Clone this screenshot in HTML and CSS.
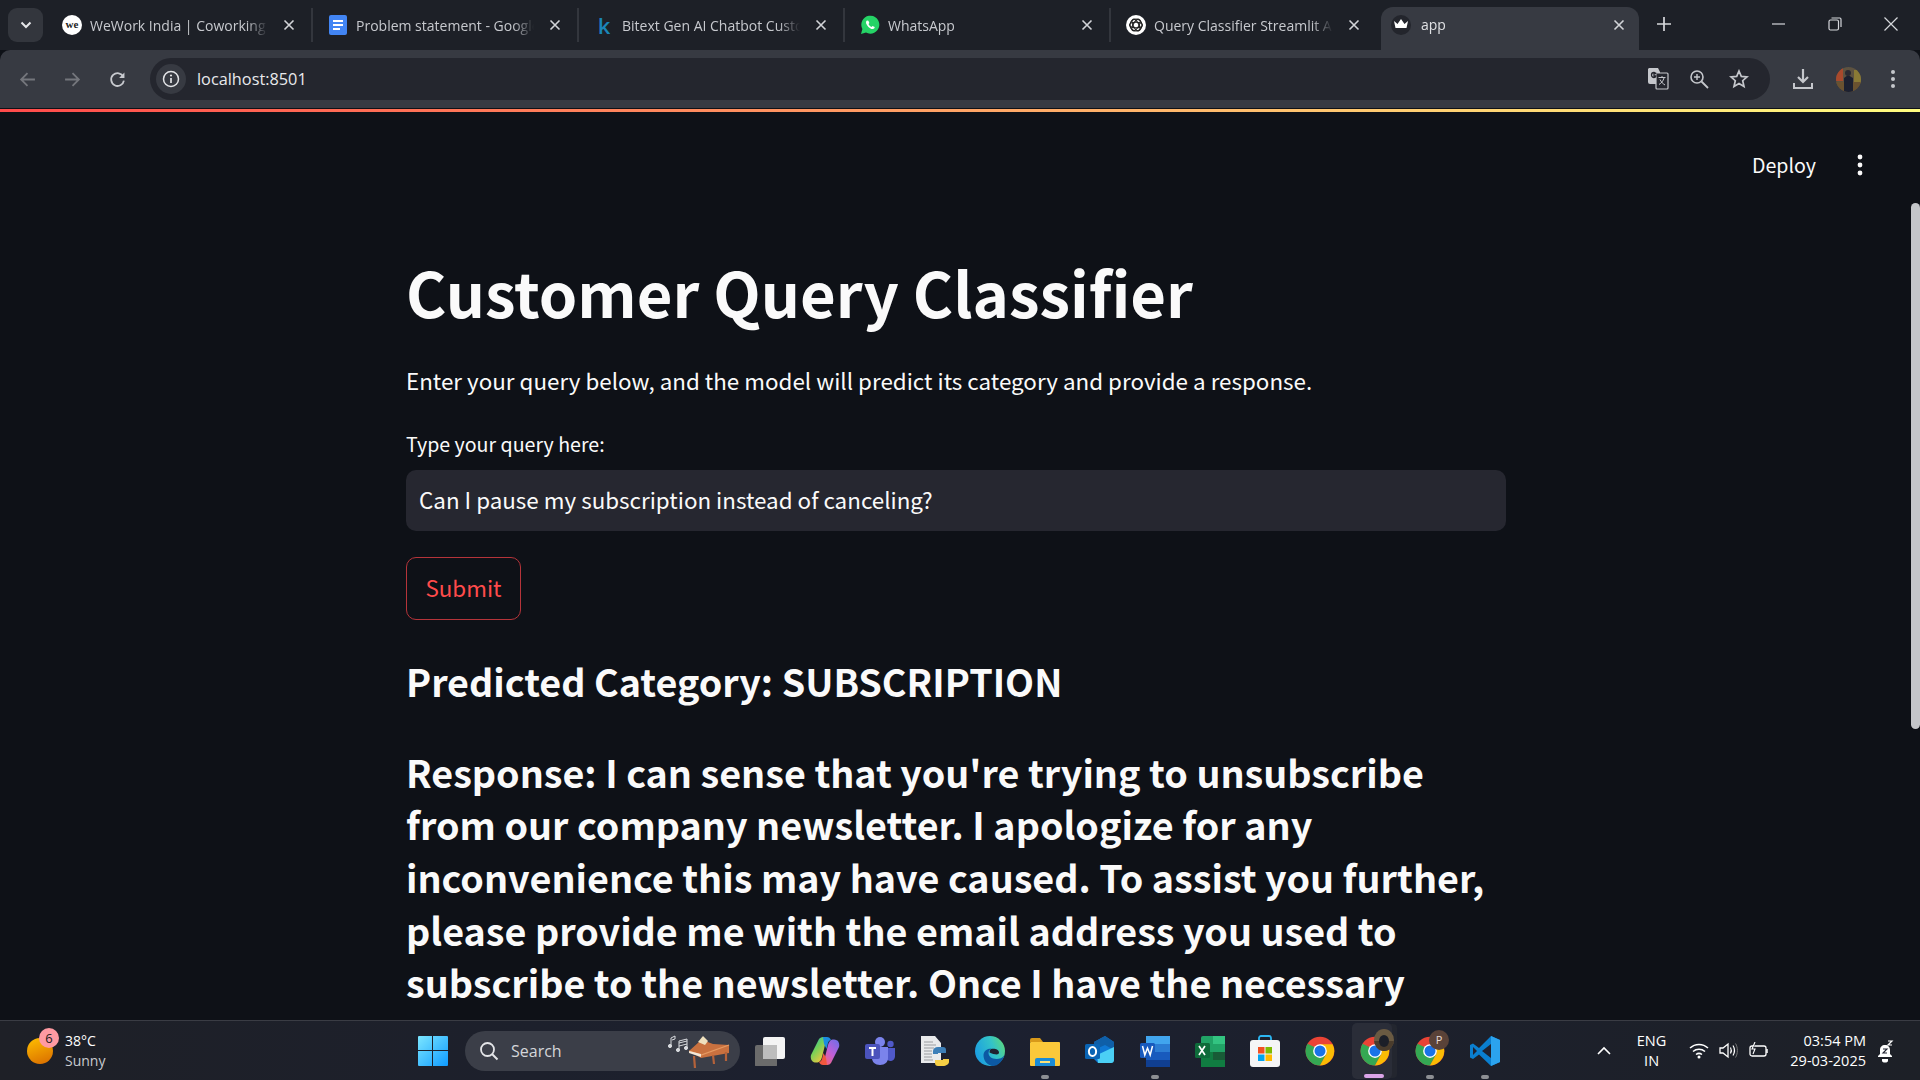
FILE: index.html
```html
<!DOCTYPE html>
<html lang="en">
<head>
    <meta charset="UTF-8">
    <title>app</title>
    <link rel="stylesheet" href="styles.css">
</head>
<body>
    <svg class="defs" width="0" height="0">
        <symbol id="chrome" viewBox="0 0 48 48">
            <circle cx="24" cy="24" r="23" fill="#ea4335"/>
            <path d="M4 12.500A23 23 0 0 0 24 47L35 27z" fill="#34a853"/>
            <path d="M24 13H44A23 23 0 0 1 24 47L35 27z" fill="#fbbc04"/>
            <circle cx="24" cy="24" r="11" fill="#fff"/>
            <circle cx="24" cy="24" r="8.800" fill="#1a73e8"/>
        </symbol>
        <symbol id="close" viewBox="0 0 12 12">
            <path d="M1.500 1.500 10.500 10.500M10.500 1.500 1.500 10.500" stroke="currentColor" stroke-width="1.600" fill="none"/>
        </symbol>
    </svg>

    <!-- Полоса вкладок -->
    <div class="tabstrip">
        <button class="tab-search">
            <svg width="12" height="8" viewBox="0 0 12 8"><path d="M1.500 1.500 6 6l4.500-4.500" stroke="#e6e7ea" stroke-width="2" fill="none"/></svg>
        </button>
        <div class="tab">
            <span class="fav fav-we">we</span>
            <span class="tab-title">WeWork India | Coworking Space</span>
            <svg class="tab-close"><use href="#close"/></svg>
        </div>
        <div class="tab">
            <svg class="fav" viewBox="0 0 20 20"><rect x="1" width="18" height="20" rx="2" fill="#4285f4"/><path d="M5 6h10M5 10h10M5 14h7" stroke="#fff" stroke-width="1.800"/></svg>
            <span class="tab-title">Problem statement - Google Docs</span>
            <svg class="tab-close"><use href="#close"/></svg>
        </div>
        <div class="tab">
            <span class="fav fav-k">k</span>
            <span class="tab-title">Bitext Gen AI Chatbot Customer</span>
            <svg class="tab-close"><use href="#close"/></svg>
        </div>
        <div class="tab">
            <svg class="fav" viewBox="0 0 20 20"><path d="M1 19l1.400-5A9 9 0 1 1 6 17.600z" fill="#25d366"/><path d="M7 5.500c-1 .6-1.300 2-.6 3.600 1 2.200 2.700 3.900 5 4.800 1.500.5 2.600.1 3.100-.9l.2-1-2.200-1.100-1 1.100c-1.300-.5-2.400-1.600-3-2.900l.9-1-1-2.400z" fill="#fff"/></svg>
            <span class="tab-title">WhatsApp</span>
            <svg class="tab-close"><use href="#close"/></svg>
        </div>
        <div class="tab tab-last">
            <svg class="fav" viewBox="0 0 20 20"><circle cx="10" cy="10" r="10" fill="#fff"/><g fill="none" stroke="#222" stroke-width="1.100"><circle cx="10" cy="10" r="6"/><ellipse cx="10" cy="10" rx="6.500" ry="2.800" transform="rotate(60 10 10)"/><ellipse cx="10" cy="10" rx="6.500" ry="2.800" transform="rotate(-60 10 10)"/><ellipse cx="10" cy="10" rx="6.500" ry="2.800"/></g></svg>
            <span class="tab-title">Query Classifier Streamlit App</span>
            <svg class="tab-close"><use href="#close"/></svg>
        </div>
        <div class="tab tab-active">
            <span class="fav-crown">
                <svg width="14" height="11" viewBox="0 0 14 11"><path d="M0 2l3.500 3L7 0l3.500 5L14 2l-1.500 7h-11z" fill="#fff"/></svg>
            </span>
            <span class="tab-title">app</span>
            <svg class="tab-close"><use href="#close"/></svg>
        </div>
        <svg class="new-tab" width="14" height="14" viewBox="0 0 14 14"><path d="M7 0v14M0 7h14" stroke="#d6d8dc" stroke-width="1.700"/></svg>
        <div class="win-controls">
            <svg width="14" height="14" viewBox="0 0 14 14"><path d="M0 7h13" stroke="#d6d8dc" stroke-width="1.200"/></svg>
            <svg width="14" height="14" viewBox="0 0 14 14"><rect x="1" y="3" width="9.500" height="10" rx="1.500" fill="none" stroke="#d6d8dc" stroke-width="1.200"/><path d="M3.500 1H12a1.500 1.500 0 0 1 1 1.500V10" fill="none" stroke="#d6d8dc" stroke-width="1.200"/></svg>
            <svg width="14" height="14" viewBox="0 0 14 14"><path d="M.5.500l13 13M13.500.500l-13 13" stroke="#d6d8dc" stroke-width="1.200"/></svg>
        </div>
    </div>

    <!-- Панель адреса -->
    <div class="toolbar">
        <svg class="nav-btn" viewBox="0 0 16 16"><path d="M15 8H2M8 2 2 8l6 6" stroke="#74767c" stroke-width="1.700" fill="none"/></svg>
        <svg class="nav-btn" viewBox="0 0 16 16"><path d="M1 8h13M8 2l6 6-6 6" stroke="#74767c" stroke-width="1.700" fill="none"/></svg>
        <svg class="nav-btn" viewBox="0 0 16 16"><path d="M13.500 5.500A6 6 0 1 0 14 9" stroke="#c8cacf" stroke-width="1.700" fill="none"/><path d="M14.500 1.500v5h-5z" fill="#c8cacf"/></svg>
        <div class="omnibox">
            <span class="site-info">
                <svg width="18" height="18" viewBox="0 0 18 18"><circle cx="9" cy="9" r="7.500" fill="none" stroke="#e3e4e7" stroke-width="1.500"/><path d="M9 8v5" stroke="#e3e4e7" stroke-width="1.700"/><circle cx="9" cy="5.500" r="1.100" fill="#e3e4e7"/></svg>
            </span>
            <span class="url">localhost:8501</span>
            <span class="omni-icons">
                <svg width="22" height="24" viewBox="0 0 22 24"><path d="M2 1h9l2 4v12H3a2 2 0 0 1-2-2V2z" fill="#c5c7cc"/><rect x="9" y="6" width="12" height="16" rx="1" fill="#24262e" stroke="#c5c7cc" stroke-width="1.200"/><path d="M11.500 10.500h7M15 9v1.500M17 11c-.8 3-2.500 5-5 6.500M13 12.500c1 2 2.500 4 5 5.500" stroke="#c5c7cc" stroke-width="1" fill="none"/><path d="M9.500 6.500H7v2.500h1.800c-.2 1-1 1.500-1.800 1.500a2.500 2.500 0 0 1 0-5c.6 0 1 .2 1.400.5" stroke="#24262e" stroke-width="1.300" fill="none"/></svg>
                <svg width="20" height="20" viewBox="0 0 20 20"><circle cx="8" cy="8" r="6" fill="none" stroke="#c5c7cc" stroke-width="1.600"/><path d="M12.500 12.500 19 19" stroke="#c5c7cc" stroke-width="1.800"/><path d="M8 5v6M5 8h6" stroke="#c5c7cc" stroke-width="1.400"/></svg>
                <svg width="20" height="20" viewBox="0 0 20 20"><path d="M10 2l2.300 5.400 5.700.5-4.300 3.800 1.300 5.700L10 14.400l-5 3 1.300-5.700L2 7.900l5.700-.5z" fill="none" stroke="#c5c7cc" stroke-width="1.700"/></svg>
            </span>
        </div>
        <div class="tool-icons">
            <svg width="22" height="22" viewBox="0 0 22 22"><path d="M11 1v13M6 9l5 5 5-5" stroke="#c5c7cc" stroke-width="2.200" fill="none"/><path d="M2 15v5h18v-5" stroke="#c5c7cc" stroke-width="2" fill="none"/></svg>
            <svg width="25" height="25" viewBox="0 0 25 25"><clipPath id="av"><circle cx="12.500" cy="12.500" r="12.500"/></clipPath><g clip-path="url(#av)"><rect width="25" height="25" fill="#5d5240"/><rect width="7" height="14" fill="#a8492c"/><rect x="18" y="3" width="7" height="13" fill="#8a7a35"/><rect x="0" y="15" width="25" height="10" fill="#6a5230"/><path d="M8 25V11l4-3 5 3v14z" fill="#1c2030"/><circle cx="12" cy="6" r="3" fill="#2b2a32"/></g></svg>
            <svg class="menu-dots" width="6" height="20" viewBox="0 0 6 20"><circle cx="3" cy="3" r="2" fill="#c5c7cc"/><circle cx="3" cy="10" r="2" fill="#c5c7cc"/><circle cx="3" cy="17" r="2" fill="#c5c7cc"/></svg>
        </div>
    </div>
    <div class="deco-line"></div>

    <!-- Страница приложения -->
    <main class="app">
        <header class="app-header">
            <span class="deploy">Deploy</span>
            <svg width="6" height="22" viewBox="0 0 6 22"><circle cx="3" cy="3" r="2.400" fill="#fafafa"/><circle cx="3" cy="11" r="2.400" fill="#fafafa"/><circle cx="3" cy="19" r="2.400" fill="#fafafa"/></svg>
        </header>
        <div class="scroll-thumb"></div>
        <section class="block">
            <h1>Customer Query Classifier</h1>
            <p class="intro">Enter your query below, and the model will predict its category and provide a response.</p>
            <label class="field-label" for="query">Type your query here:</label>
            <input class="field" id="query" type="text" value="Can I pause my subscription instead of canceling?">
            <button class="submit">Submit</button>
            <h2 class="category">Predicted Category: SUBSCRIPTION</h2>
            <h2 class="response">Response: I can sense that you're trying to unsubscribe from our company newsletter. I apologize for any inconvenience this may have caused. To assist you further, please provide me with the email address you used to subscribe to the newsletter. Once I have the necessary</h2>
        </section>
    </main>

    <!-- Панель задач -->
    <footer class="taskbar">
        <div class="weather">
            <span class="sun"></span>
            <span class="badge">6</span>
            <div class="weather-text">
                <span>38°C</span>
                <span class="weather-sub">Sunny</span>
            </div>
        </div>
        <div class="task-center">
            <svg class="win-logo" width="30" height="30" viewBox="0 0 30 30">
                <defs><linearGradient id="wg" x1="0" y1="0" x2="1" y2="1"><stop offset="0" stop-color="#7ce6ff"/><stop offset="1" stop-color="#0f9bff"/></linearGradient></defs>
                <path d="M1 0h13v14H0V1a1 1 0 0 1 1-1zM15 0h14a1 1 0 0 1 1 1v13H15zM0 15h14v15H1a1 1 0 0 1-1-1zM15 15h15v14a1 1 0 0 1-1 1H15z" fill="url(#wg)"/>
            </svg>
            <div class="search-pill">
                <svg width="20" height="20" viewBox="0 0 20 20"><circle cx="8.500" cy="8.500" r="6.500" fill="none" stroke="#e4e5e8" stroke-width="1.800"/><path d="M13 13l5.500 5.500" stroke="#e4e5e8" stroke-width="2"/></svg>
                <span class="search-text">Search</span>
                <svg class="piano" width="62" height="34" viewBox="0 0 62 34">
                    <g fill="#d8dade" stroke="#d8dade" stroke-width="1"><path d="M3 12V4l4-2v3l-3 1" fill="none"/><path d="M11 16V7l8-2v9M11 9l8-2M11 12l8-2" fill="none"/><circle cx="2" cy="12" r="1.600"/><circle cx="10" cy="16" r="1.600"/><circle cx="18" cy="14" r="1.600"/></g>
                    <path d="M21 17 31 8l6-1 8 3 16 1v8l-28 5z" fill="#c9713f"/>
                    <path d="M21 17l12 4 28-10" fill="none" stroke="#e59a62" stroke-width="1.200"/>
                    <path d="M30 8l5-6 5 5-3 4z" fill="#efe0bd"/>
                    <path d="M21 17l12 3v3l-12-4z" fill="#f3e8d8"/>
                    <path d="M26 22l1 12M45 21l1 9M58 18v9" stroke="#b4623a" stroke-width="2.200"/>
                </svg>
            </div>
            <ul class="task-icons">
                <li>
                    <svg width="30" height="30" viewBox="0 0 30 30"><rect x="8" y="1" width="22" height="22" rx="2" fill="#f4f4f4"/><rect x="0" y="9" width="22" height="22" rx="2" fill="#6b6b6b"/><rect x="8" y="9" width="14" height="14" fill="#bdbdbd"/></svg>
                </li>
                <li>
                    <svg width="30" height="28" viewBox="0 0 30 28">
                        <defs>
                            <linearGradient id="cp1" x1="0" y1="0" x2=".7" y2="1"><stop offset="0" stop-color="#18b4d8"/><stop offset=".45" stop-color="#6fd05a"/><stop offset="1" stop-color="#f8c63c"/></linearGradient>
                            <linearGradient id="cp2" x1=".9" y1="0" x2=".2" y2="1"><stop offset="0" stop-color="#6f6fe8"/><stop offset=".55" stop-color="#c05fd8"/><stop offset="1" stop-color="#f4647a"/></linearGradient>
                        </defs>
                        <path d="M9 2c1-1 2-2 4-2h4l-5 20c-.5 2-1.500 4-3 5-1 .6-2 .6-3 .6C2 25.600 0 22 1 18z" fill="url(#cp1)"/>
                        <path d="M21 26c-1 1-2 2-4 2h-4l5-20c.5-2 1.500-4 3-5 1-.6 2-.6 3-.6 4 0 6 3.600 5 7.600z" fill="url(#cp2)"/>
                        <path d="M13 0h4c2 0 3 1 4 3-2 .5-3 2-3.500 5l-1 4-2.500-5z" fill="#1b8de0"/>
                        <path d="M17 28h-4c-2 0-3-1-4-3 2-.5 3-2 3.500-5l1-4 2.500 5z" fill="#f2583e"/>
                    </svg>
                </li>
                <li>
                    <svg width="30" height="28" viewBox="0 0 30 28"><circle cx="15" cy="5" r="5" fill="#7b83eb"/><circle cx="25.500" cy="7" r="3.200" fill="#5059c9"/><path d="M21 11h9v8c0 3-2 5-5 5l-3-1z" fill="#5059c9"/><path d="M7 10h16v11c0 4-3 7-8 7s-8-3-8-7z" fill="#7b83eb"/><rect x="0" y="7" width="15" height="15" rx="2" fill="#4b53bc"/><path d="M4 11h7M7.500 11v8" stroke="#fff" stroke-width="2"/></svg>
                </li>
                <li>
                    <svg width="30" height="30" viewBox="0 0 30 30"><path d="M1 0h14l6 7v20H1z" fill="#e9eaec"/><path d="M4 6h9M4 9h12M4 12h10M4 15h8M4 18h8M4 21h8M4 24h9" stroke="#9a9ca0" stroke-width="1"/><path d="M18 11h5c2 0 3 1 3 3v3h-8v1h-5v-3c0-2 2-4 5-4z" fill="#3d7fb8"/><path d="M23 30h-5c-2 0-3-1-3-3v-3h8v-1h6v3c0 2-3 4-6 4z" fill="#f6cf45"/></svg>
                </li>
                <li>
                    <svg width="30" height="30" viewBox="0 0 30 30">
                        <defs><linearGradient id="eg" x1="0" y1=".6" x2="1" y2=".2"><stop offset="0" stop-color="#1b9de2"/><stop offset=".6" stop-color="#33c3c8"/><stop offset="1" stop-color="#5dd87a"/></linearGradient></defs>
                        <circle cx="15" cy="15" r="15" fill="url(#eg)"/>
                        <path d="M29.500 19c-2 3-5 4-8 4-5 0-8-3-8-6 0-2 1.500-4 3-4.500-5 0-8 3-8 7 0 5 4 10 9 10.500 6 0 10-5 12-11z" fill="#0c59a4"/>
                        <path d="M16 13c3-1 8 0 8 3.500 0 1-1 2-2.500 2s-5-1-7-2c0-1.500.5-3 1.500-3.500z" fill="#1f2230"/>
                    </svg>
                </li>
                <li class="has-dot">
                    <svg width="30" height="30" viewBox="0 0 30 30"><path d="M0 4a2 2 0 0 1 2-2h8l3 4h-13z" fill="#d8991a"/><rect y="6" width="30" height="24" rx="1" fill="#fbc83a"/><path d="M5 30v-6a2 2 0 0 1 2-2h16a2 2 0 0 1 2 2v6z" fill="#1a8bd6"/><rect x="10" y="25" width="10" height="2" fill="#fbe27a"/></svg>
                </li>
                <li>
                    <svg width="30" height="30" viewBox="0 0 30 30"><path d="M9 6 20 0l9 6v18l-2 3H13l-4-4z" fill="#0f78d4"/><path d="M20 0l9 6v8l-9-5-11 5V6z" fill="#0f5fa8"/><path d="M12 19l17-8v13a3 3 0 0 1-3 3H13z" fill="#4bd0f5"/><rect x="0" y="8" width="15" height="15" rx="1.500" fill="#0a64b4"/><ellipse cx="7.500" cy="15.500" rx="3.600" ry="4.500" fill="none" stroke="#fff" stroke-width="2"/></svg>
                </li>
                <li class="has-dot">
                    <svg width="30" height="32" viewBox="0 0 30 32"><rect x="6" y="1" width="24" height="31" rx="2" fill="#2b7cd3"/><rect x="6" y="1" width="24" height="8" fill="#41a5ee"/><rect x="6" y="17" width="24" height="8" fill="#185abd"/><rect x="6" y="25" width="24" height="7" fill="#103f91"/><rect x="0" y="8" width="15" height="15" rx="1.500" fill="#185abd"/><path d="M2.500 11l2.300 9 2.700-7 2.700 7 2.300-9" stroke="#fff" stroke-width="1.500" fill="none"/></svg>
                </li>
                <li>
                    <svg width="30" height="32" viewBox="0 0 30 32"><rect x="6" y="1" width="24" height="31" rx="2" fill="#21a366"/><rect x="18" y="1" width="12" height="8" fill="#33c481"/><rect x="6" y="17" width="12" height="8" fill="#107c41"/><rect x="18" y="17" width="12" height="8" fill="#185c37"/><rect x="6" y="25" width="24" height="7" fill="#107c41"/><rect x="0" y="8" width="15" height="15" rx="1.500" fill="#0e6b3a"/><path d="M4 11l6 9M10 11l-6 9" stroke="#fff" stroke-width="1.700"/></svg>
                </li>
                <li>
                    <svg width="30" height="32" viewBox="0 0 30 32"><path d="M9 6V3a2 2 0 0 1 2-2h8a2 2 0 0 1 2 2v3" fill="none" stroke="#2cb6f2" stroke-width="1.800"/><rect y="5" width="30" height="27" rx="3" fill="#f5f5f5"/><rect x="8" y="12" width="6.500" height="6.500" fill="#f25022"/><rect x="15.500" y="12" width="6.500" height="6.500" fill="#7fba00"/><rect x="8" y="19.500" width="6.500" height="6.500" fill="#00a4ef"/><rect x="15.500" y="19.500" width="6.500" height="6.500" fill="#ffb900"/></svg>
                </li>
                <li><svg width="30" height="30"><use href="#chrome"/></svg></li>
                <li class="is-active">
                    <svg class="task-glyph" width="30" height="30"><use href="#chrome"/></svg>
                    <svg class="overlay-pic" width="20" height="22" viewBox="0 0 20 22"><clipPath id="ov"><ellipse cx="10" cy="11" rx="10" ry="11"/></clipPath><g clip-path="url(#ov)"><rect width="20" height="22" fill="#6a5a42"/><rect y="12" width="20" height="10" fill="#4a3c2c"/><ellipse cx="10" cy="12" rx="5" ry="6" fill="#1c1f28"/></g></svg>
                </li>
                <li class="has-dot">
                    <svg width="30" height="30"><use href="#chrome"/></svg>
                    <span class="overlay-p">P</span>
                </li>
                <li class="has-dot">
                    <svg width="30" height="30" viewBox="0 0 30 30"><path d="M21 0l9 4v22l-9 4-12-11.500-6 4.500-3-1.500V9l3-1.500 6 4.500z" fill="#0a7fd0"/><path d="M21 0l9 4v22l-9 4z" fill="#2ba3ee"/><path d="M21 8 12 15l9 7z" fill="#1f2230"/><path d="M3 11v8l4-4z" fill="#1f2230"/></svg>
                </li>
            </ul>
        </div>
        <div class="tray">
            <svg class="tray-caret" width="14" height="9" viewBox="0 0 14 9"><path d="M1 8l6-6 6 6" stroke="#fff" stroke-width="1.600" fill="none"/></svg>
            <div class="lang"><span>ENG</span><span>IN</span></div>
            <div class="tray-icons">
                <svg width="20" height="17" viewBox="0 0 20 17"><g fill="none" stroke="#fff" stroke-width="1.500"><path d="M1 6a13 13 0 0 1 18 0M4 9.500a9 9 0 0 1 12 0M7 12.500a5 5 0 0 1 6 0"/></g><circle cx="10" cy="15" r="1.500" fill="#fff"/></svg>
                <svg width="20" height="17" viewBox="0 0 20 17"><path d="M1 6h3l5-4v13l-5-4H1z" fill="none" stroke="#fff" stroke-width="1.300"/><path d="M11.500 5.500c1 1.800 1 4.200 0 6M14 3.500c1.800 3 1.800 7 0 10" fill="none" stroke="#fff" stroke-width="1.200"/><path d="M16.500 1.500c2.500 4 2.500 10 0 14" fill="none" stroke="#777" stroke-width="1"/></svg>
                <svg width="20" height="17" viewBox="0 0 20 17"><rect x="1" y="4" width="16" height="10" rx="2" fill="none" stroke="#fff" stroke-width="1.300"/><path d="M18 7v4" stroke="#fff" stroke-width="1.500"/><path d="M6 0 3 7h3L4 12" fill="#1f2230" stroke="#fff" stroke-width="1.100"/></svg>
            </div>
            <div class="clock"><span>03:54 PM</span><span>29-03-2025</span></div>
            <svg class="bell" width="18" height="24" viewBox="0 0 18 24"><path d="M9 6c-3 0-5 2-5 5v4l-2 2v1h14v-1l-2-2v-4c0-3-2-5-5-5z" fill="#fff"/><path d="M6 20h6v1.500a3 2 0 0 1-6 0z" fill="#fff"/><path d="M7 10h4l-4 4h4" stroke="#1f2230" stroke-width="1.100" fill="none"/><path d="M12 2h4l-4 4h4" stroke="#fff" stroke-width="1.200" fill="none"/></svg>
        </div>
    </footer>
</body>
</html>
```

FILE: styles.css
```css
html, body {
    margin: 0;
    height: 100%;
}
body {
    width: 1920px;
    height: 1080px;
    overflow: hidden;
    display: flex;
    flex-direction: column;
    background-color: #0e1117;
    font-family: "Open Sans", "Noto Sans", sans-serif;
}
.defs {
    position: absolute;
}

/* tabs */
.tabstrip {
    height: 50px;
    flex: none;
    display: flex;
    align-items: flex-start;
    background-color: #1d2027;
    padding-left: 8px;
    box-sizing: border-box;
}
.tab-search {
    width: 35px;
    height: 34px;
    margin: 8px 4px 0 0;
    padding: 0;
    border: none;
    border-radius: 9px;
    background-color: #33363d;
    display: flex;
    align-items: center;
    justify-content: center;
}
.tab {
    width: 266px;
    height: 34px;
    margin-top: 8px;
    display: flex;
    align-items: center;
    padding: 0 16px 0 15px;
    box-sizing: border-box;
    border-right: 2px solid #33363d;
    color: #c7c9ce;
    font-size: 14px;
}
.tab-last {
    width: 270px;
    border-right: none;
    padding-left: 15px;
    padding-right: 21px;
}
.fav {
    width: 20px;
    height: 20px;
    flex: none;
    margin-right: 8px;
}
.fav-we {
    border-radius: 50%;
    background-color: #fff;
    color: #222;
    font: bold 11px/19px "Liberation Serif", serif;
    text-align: center;
}
.fav-k {
    color: #1a86b8;
    font: 600 22px/20px "Open Sans", sans-serif;
    text-align: center;
}
.tab-title {
    flex: 1;
    white-space: nowrap;
    overflow: hidden;
    margin-right: 15px;
    -webkit-mask-image: linear-gradient(to right, #000 88%, transparent 100%);
    mask-image: linear-gradient(to right, #000 88%, transparent 100%);
}
.tab-close {
    width: 12px;
    height: 12px;
    flex: none;
    color: #d2d4d8;
}
.tab-active {
    width: 258px;
    height: 43px;
    margin-top: 7px;
    padding: 0 14px 8px 10px;
    background-color: #373a42;
    border: none;
    border-radius: 12px 12px 0 0;
    color: #e0e1e4;
}
.fav-crown {
    width: 20px;
    height: 20px;
    flex: none;
    margin-right: 10px;
    border-radius: 50%;
    background-color: #23252c;
    display: flex;
    align-items: center;
    justify-content: center;
}
.new-tab {
    margin: 17px 0 0 18px;
}
.win-controls {
    margin-left: auto;
    display: flex;
    gap: 42px;
    padding: 17px 22px 0 0;
}

/* address bar */
.toolbar {
    height: 58px;
    flex: none;
    display: flex;
    align-items: center;
    background-color: #373a42;
    border-radius: 10px 10px 0 0;
    padding: 0 18px 0 19px;
    box-sizing: border-box;
    margin-bottom: 1px;
}
.nav-btn {
    width: 17px;
    height: 17px;
    margin-right: 28px;
}
.omnibox {
    width: 1620px;
    height: 42px;
    margin-left: -4px;
    flex: none;
    display: flex;
    align-items: center;
    background-color: #24262e;
    border-radius: 21px;
    box-sizing: border-box;
    padding: 0 21px 0 6px;
}
.site-info {
    width: 30px;
    height: 30px;
    flex: none;
    border-radius: 50%;
    background-color: #373a42;
    display: flex;
    align-items: center;
    justify-content: center;
}
.url {
    margin-left: 11px;
    color: #e8e9ec;
    font-size: 16.300px;
}
.omni-icons {
    margin-left: auto;
    display: flex;
    align-items: center;
    gap: 20px;
}
.tool-icons {
    margin-left: 22px;
    display: flex;
    align-items: center;
    gap: 22px;
}
.menu-dots {
    margin-left: 7px;
}
.deco-line {
    height: 3px;
    flex: none;
    background-image: linear-gradient(90deg, #ff4b4b, #fffd80);
}

/* streamlit page */
.app {
    flex: 1;
    min-height: 0;
    overflow: hidden;
    position: relative;
    padding-left: 406px;
    font-family: "Noto Sans CJK SC", "Noto Sans", sans-serif;
    color: #fafafa;
}
.app-header {
    position: absolute;
    top: 39px;
    right: 57px;
    display: flex;
    align-items: center;
    gap: 41px;
}
.deploy {
    font-size: 19.600px;
    line-height: 28px;
}
.scroll-thumb {
    position: absolute;
    top: 91px;
    right: 0;
    width: 9px;
    height: 526px;
    border-radius: 5px;
    background-color: #c4c6ca;
}
.block {
    width: 1100px;
    padding-top: 139px;
}
h1 {
    margin: 0;
    font-size: 61.600px;
    line-height: 82px;
    font-weight: 700;
}
.intro {
    margin: 30px 0 0;
    font-size: 22.400px;
    line-height: 34px;
}
.field-label {
    display: block;
    margin-top: 32px;
    font-size: 19.600px;
    line-height: 30px;
}
.field {
    display: block;
    width: 100%;
    height: 61px;
    margin-top: 11px;
    padding: 0 13px 3px;
    box-sizing: border-box;
    border: none;
    border-radius: 10px;
    background-color: #262730;
    color: #fafafa;
    font: 22.400px "Noto Sans CJK SC", sans-serif;
}
.submit {
    display: block;
    width: 115px;
    height: 63px;
    margin-top: 26px;
    padding: 0 0 3px;
    border: 1.500px solid #b5343a;
    border-radius: 10px;
    background: none;
    color: #ff4b4b;
    font: 22.400px "Noto Sans CJK SC", sans-serif;
}
h2 {
    margin: 0;
    font-size: 37.700px;
    line-height: 52.650px;
    font-weight: 600;
}
.category {
    margin-top: 35px;
}
.response {
    margin-top: 38px;
}

/* windows taskbar */
.taskbar {
    height: 60px;
    flex: none;
    display: flex;
    align-items: center;
    box-sizing: border-box;
    border-top: 1px solid #3a3c44;
    background-image: linear-gradient(90deg, #1e2027, #1c2030 50%, #1d2027);
    color: #fff;
    font-family: "Open Sans", sans-serif;
    font-size: 14px;
    line-height: 20px;
}
.weather {
    width: 418px;
    flex: none;
    box-sizing: border-box;
    padding-left: 27px;
    display: flex;
    align-items: center;
    position: relative;
}
.sun {
    width: 26px;
    height: 26px;
    border-radius: 50%;
    background-image: linear-gradient(160deg, #ffc000, #d86a00);
}
.badge {
    position: absolute;
    left: 39px;
    top: -3px;
    width: 20px;
    height: 20px;
    border-radius: 50%;
    background-color: #ff9aa2;
    color: #1a1a1a;
    font-size: 13px;
    text-align: center;
}
.weather-text {
    display: flex;
    flex-direction: column;
    margin-left: 12px;
}
.weather-sub {
    color: #c9cbd0;
}
.task-center {
    display: flex;
    align-items: center;
}
.search-pill {
    width: 275px;
    height: 40px;
    margin-left: 17px;
    box-sizing: border-box;
    padding: 0 10px 0 14px;
    display: flex;
    align-items: center;
    background-color: #3b3e48;
    border-radius: 20px;
}
.search-text {
    margin-left: 12px;
    font-size: 16px;
    color: #d4d6da;
}
.piano {
    margin-left: auto;
}
.task-icons {
    list-style: none;
    display: flex;
    margin: 0 0 0 2px;
    padding: 0;
}
.task-icons li {
    width: 55px;
    height: 56px;
    display: flex;
    align-items: center;
    justify-content: center;
    position: relative;
}
.has-dot::after {
    content: "";
    position: absolute;
    bottom: 0;
    left: 24px;
    width: 8px;
    height: 4px;
    border-radius: 2px;
    background-color: #8d8f94;
}
.is-active::before {
    content: "";
    position: absolute;
    top: 0;
    bottom: 0;
    left: 5px;
    width: 40px;
    background-color: #2a2d38;
    border-radius: 5px;
    box-shadow: 6px 0 0 -1px #23262f;
}
.is-active::after {
    content: "";
    position: absolute;
    bottom: 1px;
    left: 17px;
    width: 20px;
    height: 4px;
    border-radius: 2px;
    background-color: #dba4e8;
}
.task-glyph {
    position: relative;
}
.overlay-pic {
    position: absolute;
    top: 6px;
    right: 8px;
}
.overlay-p {
    position: absolute;
    top: 7px;
    right: 8px;
    width: 20px;
    height: 20px;
    border-radius: 50%;
    background-color: #5a4238;
    color: #e8dcd6;
    font-size: 11px;
    text-align: center;
}
.tray {
    margin-left: auto;
    display: flex;
    align-items: center;
    padding-right: 26px;
    font-size: 14.500px;
}
.lang, .clock {
    display: flex;
    flex-direction: column;
    line-height: 20px;
}
.lang {
    margin-left: 26px;
    align-items: center;
}
.tray-icons {
    margin-left: 23px;
    display: flex;
    gap: 10px;
}
.clock {
    margin-left: 21px;
    align-items: flex-end;
}
.bell {
    margin-left: 10px;
}
```
